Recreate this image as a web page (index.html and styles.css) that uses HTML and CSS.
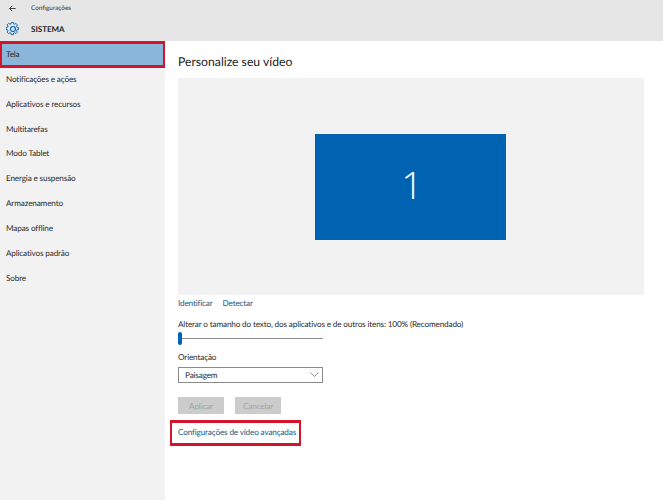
FILE: index.html
```html
<!DOCTYPE html>
<html lang="pt-BR">
<head>
<meta charset="utf-8">
<title>Configurações</title>
<link rel="stylesheet" href="styles.css">
</head>
<body>
<header class="top">
  <div class="titlebar">
    <svg class="back" width="7" height="7" viewBox="0 0 10 10"><path d="M9.5 5H1M4.6 1.2 0.9 5l3.7 3.8" fill="none" stroke="#333" stroke-width="1.3"/></svg>
    <span class="apptitle">Configurações</span>
  </div>
  <div class="section">
    <svg class="gear" width="14" height="14" viewBox="0 0 24 24"><g fill="none" stroke="#0063b1" stroke-width="1.9" stroke-linejoin="round"><circle cx="12" cy="12" r="4.2"/><path d="M10 1.5h4l.7 3.2 1.9.8 2.8-1.8 2.9 2.9-1.8 2.8.8 1.9 3.2.7v4l-3.2.7-.8 1.9 1.8 2.8-2.9 2.9-2.8-1.8-1.9.8-.7 3.2h-4l-.7-3.2-1.9-.8-2.8 1.8-2.9-2.9 1.8-2.8-.8-1.9-3.2-.7v-4l3.2-.7.8-1.9-1.8-2.8 2.9-2.9 2.8 1.8 1.9-.8z" transform="translate(12 12) scale(.85) translate(-13.5 -15)"/></g></svg>
    <span class="sectitle">SISTEMA</span>
  </div>
</header>
<div class="body">
  <nav class="side">
    <a class="item selected">Tela</a>
    <a class="item">Notificações e ações</a>
    <a class="item">Aplicativos e recursos</a>
    <a class="item">Multitarefas</a>
    <a class="item">Modo Tablet</a>
    <a class="item">Energia e suspensão</a>
    <a class="item">Armazenamento</a>
    <a class="item">Mapas offline</a>
    <a class="item">Aplicativos padrão</a>
    <a class="item">Sobre</a>
  </nav>
  <main class="main">
    <h1 class="heading">Personalize seu vídeo</h1>
    <div class="preview"><div class="monitor">1</div></div>
    <div class="links"><a class="link">Identificar</a><a class="link">Detectar</a></div>
    <div class="label">Alterar o tamanho do texto, dos aplicativos e de outros itens: 100% (Recomendado)</div>
    <div class="slider"><span class="thumb"></span></div>
    <div class="label orient">Orientação</div>
    <div class="select"><span>Paisagem</span><svg width="9" height="5" viewBox="0 0 9 5"><path d="M.5.5 4.5 4.5 8.5.5" fill="none" stroke="#888" stroke-width=".9"/></svg></div>
    <div class="buttons"><button class="btn">Aplicar</button><button class="btn">Cancelar</button></div>
    <a class="link advanced">Configurações de vídeo avançadas</a>
  </main>
</div>
</body>
</html>
```
FILE: styles.css
```css
* { box-sizing: border-box; }
html, body { margin: 0; height: 100%; }
body {
  width: 663px;
  height: 500px;
  overflow: hidden;
  display: flex;
  flex-direction: column;
  background: #fff;
  color: #1f1f1f;
  font-family: "Lato", "Noto Sans", sans-serif;
  font-size: 8.2px;
  letter-spacing: -0.16px;
  text-rendering: geometricPrecision;
}
.top { height: 41px; background: #e6e6e6; flex: none; }
.titlebar { height: 16px; display: flex; align-items: center; padding-left: 9px; }
.apptitle { margin-left: 15px; font-size: 6.4px; color: #333; letter-spacing: 0; }
.section { height: 25px; display: flex; align-items: center; padding-left: 6px; }
.sectitle { margin-left: 11px; font-size: 8px; font-weight: 700; color: #222; letter-spacing: 0; }
.body { flex: 1; display: flex; min-height: 0; }
.side { width: 165px; background: #f2f2f2; flex: none; }
.item { display: flex; align-items: center; height: 24.85px; padding: 0 0 2px 6px; color: #2b2b2b; }
.item.selected {
  height: 26.5px;
  padding: 0 0 1px 4px;
  background: #8ab6da;
  border: solid #d5142c;
  border-width: 3px 2px;
}
.main { flex: 1; padding: 12px 19px 0 13px; display: flex; flex-direction: column; align-items: flex-start; }
.heading { margin: 0; font-size: 12.2px; font-weight: 400; line-height: 17px; color: #222; letter-spacing: 0; }
.preview {
  margin-top: 8px;
  width: 466px;
  height: 217px;
  padding-right: 1px;
  background: #f2f2f2;
  display: flex;
  align-items: center;
  justify-content: center;
}
.monitor {
  width: 191px;
  height: 106px;
  padding-left: 3px;
  background: #0063b1;
  color: #fff;
  font-family: "Open Sans", sans-serif;
  font-weight: 300;
  font-size: 38px;
  line-height: 102px;
  text-align: center;
}
.links { margin-top: 1px; height: 13px; display: flex; align-items: center; gap: 10px; }
.link { color: #17597f; }
.label { color: #2b2b2b; line-height: 14px; }
.links + .label { margin-top: 8px; }
.slider { position: relative; margin-top: 1px; width: 145px; height: 13px; display: flex; align-items: center; }
.slider::before { content: ""; width: 100%; height: 1px; background: #8a8a8a; }
.thumb { position: absolute; left: 0; top: 0; width: 4px; height: 13px; border-radius: 2px; background: #0063b1; }
.orient { margin-top: 5px; }
.select {
  margin-top: 3px;
  width: 145px;
  height: 16px;
  border: 1px solid #8a8a8a;
  display: flex;
  align-items: center;
  justify-content: space-between;
  padding: 0 3px 1px 6px;
  color: #2b2b2b;
}
.buttons { margin-top: 14px; display: flex; gap: 11px; }
.btn {
  width: 46px;
  height: 17px;
  padding: 0;
  border: 0;
  background: #ccc;
  color: #a3a3a3;
  font: inherit;
  letter-spacing: inherit;
}
.advanced {
  margin: 6px 0 0 -8px;
  width: 131px;
  height: 26px;
  border: solid #d5142c;
  border-width: 3px 2px;
  display: flex;
  align-items: center;
  padding: 0 0 2px 6px;
  white-space: nowrap;
}
```
